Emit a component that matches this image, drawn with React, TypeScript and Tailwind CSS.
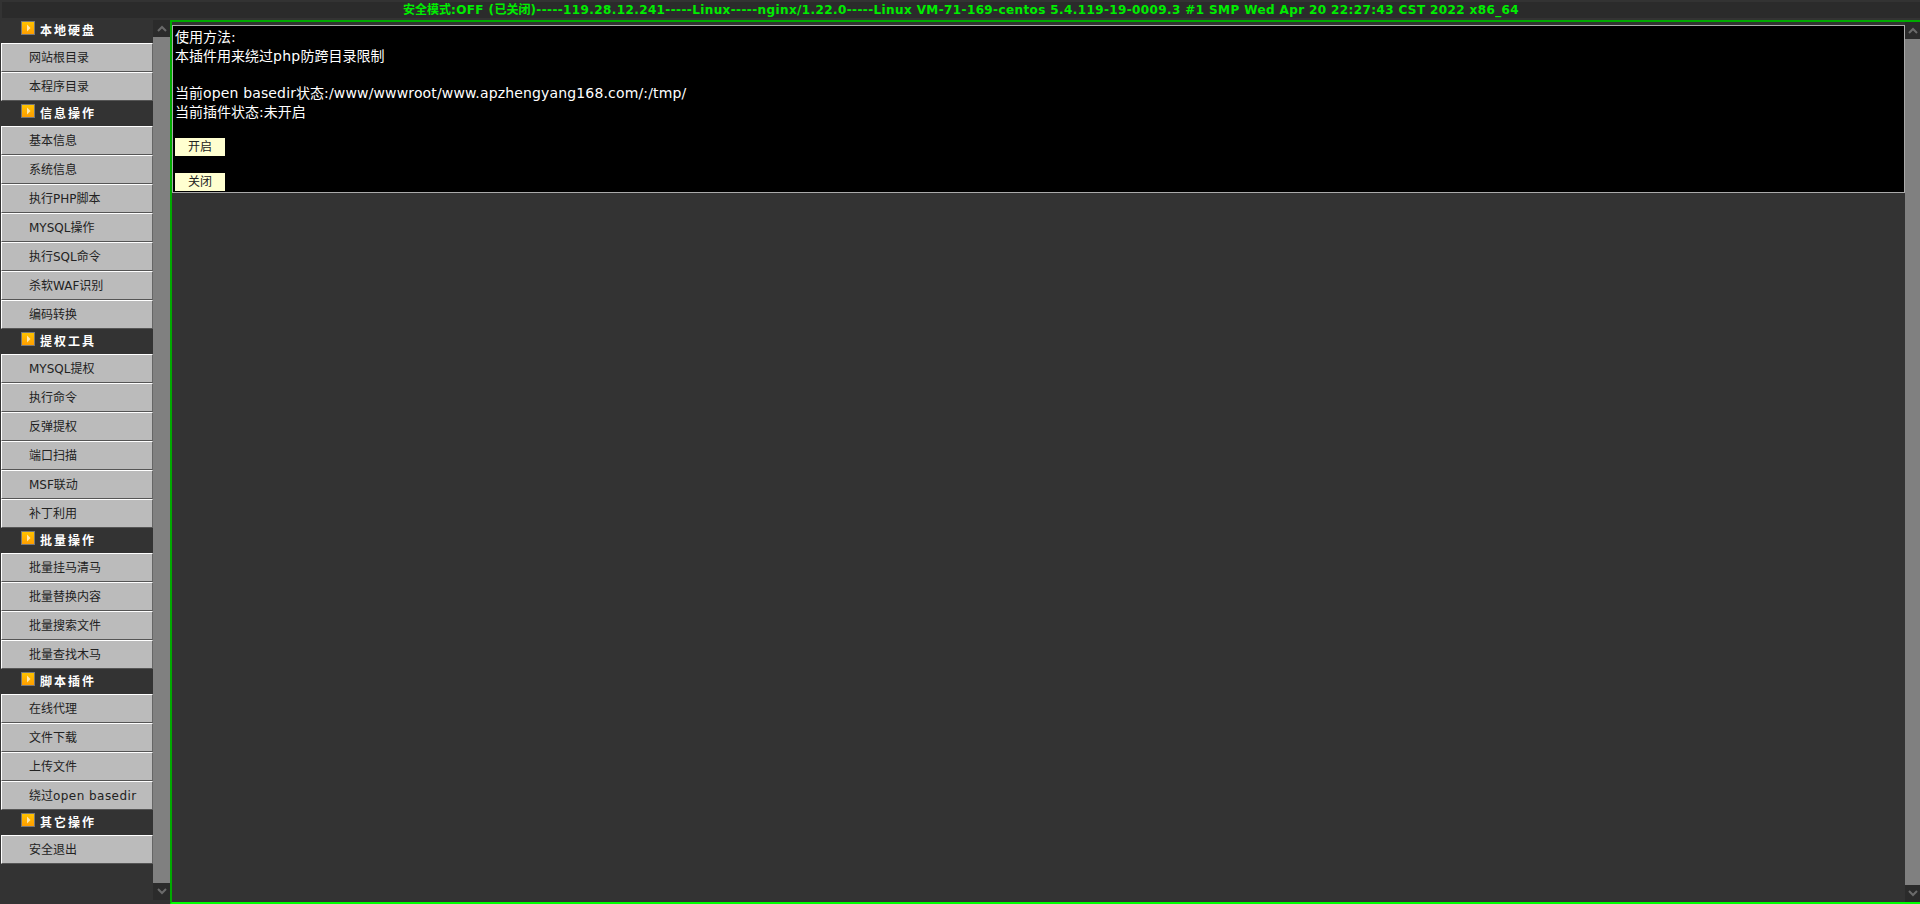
const groups: [string, string[]][] = [
  ["本地硬盘", ["网站根目录", "本程序目录"]],
  ["信息操作", ["基本信息", "系统信息", "执行PHP脚本", "MYSQL操作", "执行SQL命令", "杀软WAF识别", "编码转换"]],
  ["提权工具", ["MYSQL提权", "执行命令", "反弹提权", "端口扫描", "MSF联动", "补丁利用"]],
  ["批量操作", ["批量挂马清马", "批量替换内容", "批量搜索文件", "批量查找木马"]],
  ["脚本插件", ["在线代理", "文件下载", "上传文件", "绕过open basedir"]],
  ["其它操作", ["安全退出"]],
];

function GroupIcon() {
  return (
    <svg width="14" height="14" viewBox="0 0 14 14" className="shrink-0 mb-[5px]">
      <defs>
        <linearGradient id="orange" x1="0" y1="0" x2="0" y2="1">
          <stop offset="0" stopColor="#ffc400" />
          <stop offset="1" stopColor="#ff9c00" />
        </linearGradient>
      </defs>
      <rect x="0.5" y="0.5" width="13" height="13" fill="url(#orange)" stroke="#777777" />
      <path d="M6 3.5 L9.5 7 L6 10.5 Z" fill="#ffe9b0" />
    </svg>
  );
}

function ScrollBar({ className }: { className: string }) {
  return (
    <div className={"flex flex-col shrink-0 bg-[#808080] " + className}>
      <div className="h-[17px] bg-[#2b2b2b] flex items-center justify-center">
        <svg width="10" height="7" viewBox="0 0 10 7">
          <path d="M1 6 L5 2 L9 6" fill="none" stroke="#6a6a6a" strokeWidth="2" />
        </svg>
      </div>
      <div className="flex-1" />
      <div className="h-[17px] bg-[#2b2b2b] flex items-center justify-center">
        <svg width="10" height="7" viewBox="0 0 10 7">
          <path d="M1 1 L5 5 L9 1" fill="none" stroke="#6a6a6a" strokeWidth="2" />
        </svg>
      </div>
    </div>
  );
}

function PlainButton({ label }: { label: string }) {
  return (
    <div className="w-[50px] h-[18px] bg-[#ffffd0] text-[#222222] text-[12px] leading-[19px] text-center">{label}</div>
  );
}

function MenuItem({ item }: { item: string }) {
  const wide = item.startsWith("绕过");
  return (
    <div className="h-[29px] ml-[1px] pl-[27px] bg-[#bbbbbb] border-t border-l border-white border-r border-b border-r-[#666666] border-b-[#555555] text-[#222222] text-[12px] leading-[29px] whitespace-nowrap">
      {wide ? (
        <>
          绕过<span className="tracking-[0.45px]">open basedir</span>
        </>
      ) : (
        item
      )}
    </div>
  );
}

export default function App() {
  return (
    <div className="w-[1920px] h-[904px] overflow-hidden bg-[#333333] flex flex-col font-['DejaVu_Sans','Noto_Sans_CJK_SC',sans-serif]">
      <div className="h-[18px] shrink-0 pt-[2px] pl-[2px]">
        <div className="h-[16px] bg-[#2b2b2b] text-[#00ee00] text-[12px] font-bold leading-[16px] text-center whitespace-nowrap">
          安全模式<span className="tracking-[0.39px]">:OFF (</span>已关闭
          <span className="tracking-[0.39px]">)-----119.28.12.241-----Linux-----nginx/1.22.0-----Linux VM-71-169-centos 5.4.119-19-0009.3 #1 SMP Wed Apr 20 22:27:43 CST 2022 x86_64</span>
        </div>
      </div>
      <div className="flex-1 flex min-h-0">
        <div className="w-[153px] shrink-0 flex flex-col">
          {groups.map(([title, items]) => (
            <div key={title} className="flex flex-col">
              <div className="h-[25px] flex items-center pl-[21px] gap-[5px] text-white text-[12px] font-bold tracking-[2px] whitespace-nowrap">
                <GroupIcon />
                <span>{title}</span>
              </div>
              {items.map((item) => (
                <MenuItem key={item} item={item} />
              ))}
            </div>
          ))}
        </div>
        <ScrollBar className="w-[17px] mt-[2px] mb-[4px]" />
        <div className="flex-1 min-w-0 mt-[2px] flex border-t-2 border-l-2 border-b-2 border-t-[#00aa00] border-l-[#00aa00] border-b-[#00ff00]">
          <div className="flex-1 min-w-0 pt-[3px]">
            <div className="h-[168px] bg-black border border-[#aaaaaa] pl-[2px] pt-[2px] text-white text-[14px] leading-[19px]">
              <div>使用方法:</div>
              <div>
                本插件用来绕过<span className="tracking-[0.3px]">php</span>防跨目录限制
              </div>
              <div className="h-[18px]" />
              <div>
                当前<span className="tracking-[0.15px]">open basedir</span>状态<span className="tracking-[0.15px]">:/www/wwwroot/www.apzhengyang168.com/:/tmp/</span>
              </div>
              <div>当前插件状态:未开启</div>
              <div className="mt-[16px] flex flex-col gap-[17px]">
                <PlainButton label="开启" />
                <PlainButton label="关闭" />
              </div>
            </div>
          </div>
          <ScrollBar className="w-[15px]" />
        </div>
      </div>
    </div>
  );
}
